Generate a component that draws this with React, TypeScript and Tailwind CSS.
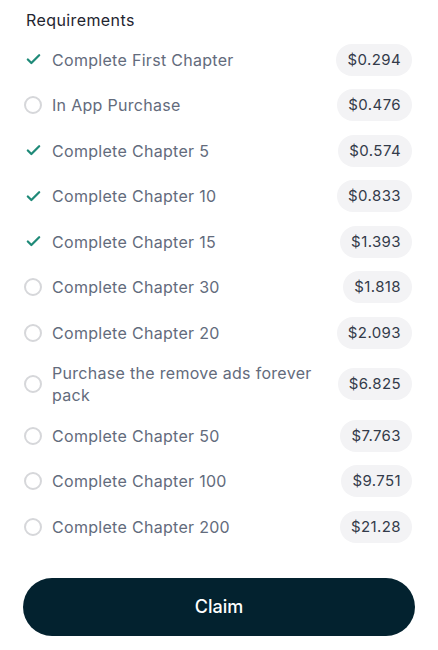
import { Check } from "lucide-react";

type Requirement = {
  label: string;
  reward: string;
  done: boolean;
};

const requirements: Requirement[] = [
  { label: "Complete First Chapter", reward: "$0.294", done: true },
  { label: "In App Purchase", reward: "$0.476", done: false },
  { label: "Complete Chapter 5", reward: "$0.574", done: true },
  { label: "Complete Chapter 10", reward: "$0.833", done: true },
  { label: "Complete Chapter 15", reward: "$1.393", done: true },
  { label: "Complete Chapter 30", reward: "$1.818", done: false },
  { label: "Complete Chapter 20", reward: "$2.093", done: false },
  { label: "Purchase the remove ads forever pack", reward: "$6.825", done: false },
  { label: "Complete Chapter 50", reward: "$7.763", done: false },
  { label: "Complete Chapter 100", reward: "$9.751", done: false },
  { label: "Complete Chapter 200", reward: "$21.28", done: false },
];

export default function App() {
  return (
    <div
      className="min-h-screen bg-white"
      style={{ fontFamily: "Inter, 'Open Sans', sans-serif" }}
    >
      <div className="pt-[8px] pl-[26px] text-[16px] leading-[24px] tracking-[0.4px] text-[#1f2530]">
        Requirements
      </div>

      <ul className="mt-[5px] pl-[24px] pr-[26px]">
        {requirements.map((r) => (
          <li
            key={r.label}
            className="flex items-center justify-between gap-6 py-[6.75px]"
          >
            <div className="flex items-center gap-[10px]">
              <span className="flex size-[18px] flex-shrink-0 items-center justify-center">
                {r.done ? (
                  <Check className="size-[17px] text-[#1f8a78]" strokeWidth={3.2} />
                ) : (
                  <span className="size-[18px] rounded-full border-2 border-[#d6d7da]" />
                )}
              </span>
              <span className="max-w-[260px] text-[16px] leading-[22px] tracking-[0.3px] text-[#636b7c]">
                {r.label}
              </span>
            </div>
            <span className="flex h-[32px] flex-shrink-0 items-center rounded-full bg-[#f3f3f5] px-[11px] text-[15px] tracking-[0.4px] text-[#333b4a]">
              {r.reward}
            </span>
          </li>
        ))}
      </ul>

      <div className="px-[23px] pt-[28px]">
        <button className="flex h-[58px] w-full items-center justify-center rounded-full bg-[#03222f] text-[18px] font-medium text-white">
          Claim
        </button>
      </div>
    </div>
  );
}
